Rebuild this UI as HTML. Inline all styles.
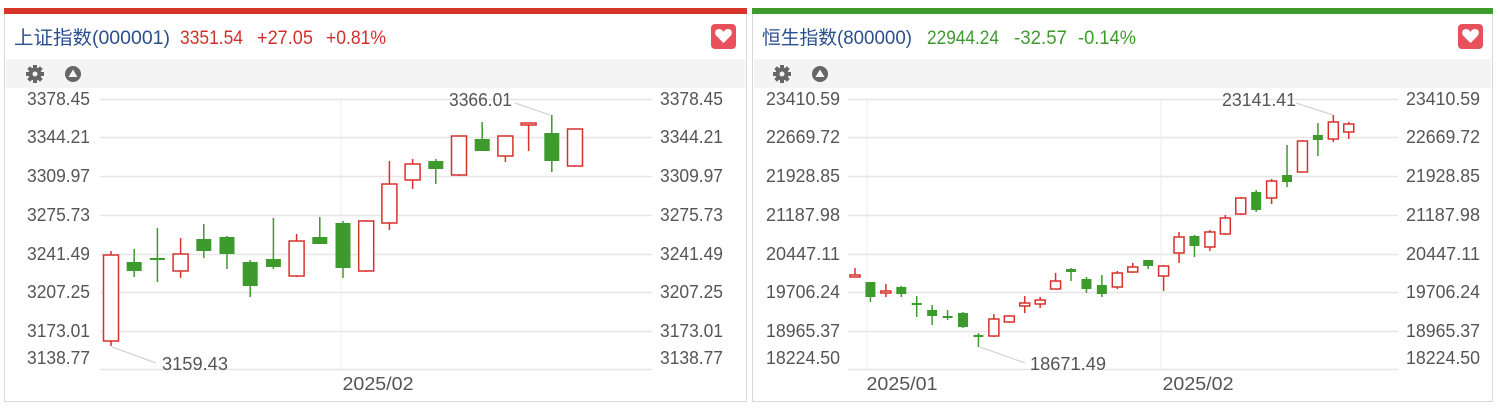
<!DOCTYPE html>
<html><head><meta charset="utf-8"><style>
html,body{margin:0;padding:0;background:#fff;width:1500px;height:412px;overflow:hidden}
svg{display:block}
text{font-family:"Liberation Sans","Noto Sans CJK SC",sans-serif}
</style></head><body>
<svg id="s" width="1500" height="412" xmlns="http://www.w3.org/2000/svg">
<rect x="0" y="0" width="1500" height="412" fill="#fff"/>
<rect x="4.5" y="8.5" width="742" height="393" fill="#fff" stroke="#d8d8d8"/>
<rect x="4" y="8" width="743" height="6" fill="#d9342b"/>
<text x="14" y="44" font-size="19" fill="#2b4f8e" textLength="156" lengthAdjust="spacingAndGlyphs">上证指数(000001)</text>
<text x="180" y="44" font-size="19" fill="#d0302c" textLength="63" lengthAdjust="spacingAndGlyphs">3351.54</text>
<text x="257" y="44" font-size="19" fill="#d0302c" textLength="56" lengthAdjust="spacingAndGlyphs">+27.05</text>
<text x="326" y="44" font-size="19" fill="#d0302c" textLength="60" lengthAdjust="spacingAndGlyphs">+0.81%</text>
<rect x="711" y="24" width="25" height="25" rx="4" fill="#e8515c"/>
<path d="M723.5 43 L716.5 36 C714 33.5 715 29 719 29 C721.5 29 723 31 723.5 32 C724 31 725.5 29 728 29 C732 29 733 33.5 730.5 36 Z" fill="#fff"/>
<rect x="6" y="59" width="739" height="29" fill="#f4f4f4"/>
<rect x="752.5" y="8.5" width="740" height="393" fill="#fff" stroke="#d8d8d8"/>
<rect x="752" y="8" width="741" height="6" fill="#3f9a2e"/>
<text x="762" y="44" font-size="19" fill="#2b4f8e" textLength="150" lengthAdjust="spacingAndGlyphs">恒生指数(800000)</text>
<text x="927" y="44" font-size="19" fill="#3f9a2e" textLength="72" lengthAdjust="spacingAndGlyphs">22944.24</text>
<text x="1014" y="44" font-size="19" fill="#3f9a2e" textLength="53" lengthAdjust="spacingAndGlyphs">-32.57</text>
<text x="1078" y="44" font-size="19" fill="#3f9a2e" textLength="58" lengthAdjust="spacingAndGlyphs">-0.14%</text>
<rect x="1458" y="24" width="25" height="25" rx="4" fill="#e8515c"/>
<path d="M1470.5 43 L1463.5 36 C1461 33.5 1462 29 1466 29 C1468.5 29 1470 31 1470.5 32 C1471 31 1472.5 29 1475 29 C1479 29 1480 33.5 1477.5 36 Z" fill="#fff"/>
<rect x="754" y="59" width="737" height="29" fill="#f4f4f4"/>
<g id="g"></g>
</svg>
<script>
var g=document.getElementById('g'),h='';
var RED='#d7312c',GRN='#3d9a2c';
function T(x,y,s,w,anchor){return '<text x="'+x+'" y="'+y+'" font-size="18" fill="#555"'+(anchor?' text-anchor="'+anchor+'"':'')+' textLength="'+w+'" lengthAdjust="spacingAndGlyphs">'+s+'</text>';}
function icons(x){
 h+='<g transform="translate('+x+',74)"><circle r="6.5" fill="#666"/>';
 for(var i=0;i<8;i++){h+='<rect x="-2" y="-9" width="4" height="4" fill="#666" transform="rotate('+(i*45)+')"/>';}
 h+='<circle r="2.5" fill="#f4f4f4"/></g>';
 h+='<circle cx="'+(x+38)+'" cy="74" r="8" fill="#666"/><path d="M'+(x+38)+' 69.5 L'+(x+42.5)+' 77 L'+(x+33.5)+' 77 Z" fill="#f4f4f4"/>';
}
icons(35);icons(782);
var ys=[99,137,176,215,254,292,331,369];
function grid(x0,x1,vx,lab,lx,rx,w){
 ys.forEach(function(y,i){h+='<line x1="'+x0+'" x2="'+x1+'" y1="'+(y+.5)+'" y2="'+(y+.5)+'" stroke="#e6e6e6" stroke-width="1.5"/>';
  var ty=y+(i==7?-5:6);
  h+=T(lx,ty,lab[i],w,'end');
  h+=T(rx,ty,lab[i],w);});
 vx.forEach(function(x){h+='<line x1="'+x+'" x2="'+x+'" y1="99" y2="369" stroke="#ececec"/>';});
}
var LL=['3378.45','3344.21','3309.97','3275.73','3241.49','3207.25','3173.01','3138.77'];
var RL=['23410.59','22669.72','21928.85','21187.98','20447.11','19706.24','18965.37','18224.50'];
grid(100,652,[341],LL,90,660,63);
grid(848,1398,[867,1161],RL,840,1406,74);
h+=T(378,390,'2025/02',71,'middle');
h+=T(902,390,'2025/01',71,'middle');
h+=T(1198,390,'2025/02',71,'middle');
function c(x,col,bt,bb,wt,wb,w){
 var C=col=='r'?RED:GRN;
 h+='<line x1="'+x+'" x2="'+x+'" y1="'+wt+'" y2="'+wb+'" stroke="'+C+'" stroke-width="1.5"/>';
 var hh=Math.max(bb-bt,2);
 if(col=='r')h+='<rect x="'+(x-w/2)+'" y="'+bt+'" width="'+w+'" height="'+hh+'" fill="#fff" stroke="'+C+'" stroke-width="1.5"/>';
 else h+='<rect x="'+(x-w/2)+'" y="'+bt+'" width="'+w+'" height="'+hh+'" fill="'+C+'"/>';
}
var L=[['r',255,341,251,346],['g',262,271,249,277],['g',258,260,228,282],['r',254,271,238,278],['g',239,251,224,258],['g',237,254,236,269],['g',262,286,260,297],['g',259,267,218,269],['r',241,276,234,277],['g',237,244,217,244],['g',223,268,221,278],['r',221,271,220,272],['r',184,223,161,230],['r',164,180,159,189],['g',161,169,159,184],['r',136,175,136,176],['g',139,151,122,151],['r',136,156,136,162],['r',123,125,123,151],['g',133,161,115,172],['r',129,166,129,167]];
L.forEach(function(d,i){c(111+i*23.2,d[0],d[1],d[2],d[3],d[4],15);});
var R=[['r',275,277,268,277],['g',282,297,282,302],['r',291,293,284,297],['g',287,294,286,297],['g',303,305,296,317],['g',310,316,305,325],['g',316,318,310,320],['g',313,327,312,328],['g',335,337,333,347],['r',319,336,314,337],['r',316,322,315,323],['r',303,306,296,313],['r',300,304,297,308],['r',281,289,273,289],['g',269,272,268,281],['g',279,289,277,293],['g',285,294,275,297],['r',273,287,271,289],['r',267,272,263,273],['g',260,266,260,269],['r',266,276,265,291],['r',237,253,232,263],['g',236,246,235,257],['r',232,247,230,251],['r',218,234,215,235],['r',198,214,197,215],['g',192,210,190,212],['r',181,198,179,204],['g',175,182,145,187],['r',141,172,140,172],['g',135,140,123,156],['r',122,139,115,142],['r',124,132,122,139]];
R.forEach(function(d,i){c(855+i*15.43,d[0],d[1],d[2],d[3],d[4],10);});
h+='<line x1="515" y1="103" x2="550" y2="115" stroke="#ccc"/>'+T(449,106,'3366.01',63);
h+='<line x1="112" y1="347" x2="156" y2="363" stroke="#ccc"/>'+T(162,370,'3159.43',66);
h+='<line x1="1296" y1="103" x2="1333" y2="115" stroke="#ccc"/>'+T(1222,106,'23141.41',74);
h+='<line x1="980" y1="347" x2="1025" y2="363" stroke="#ccc"/>'+T(1030,370,'18671.49',76);
g.innerHTML=h;
</script>
</body></html>
